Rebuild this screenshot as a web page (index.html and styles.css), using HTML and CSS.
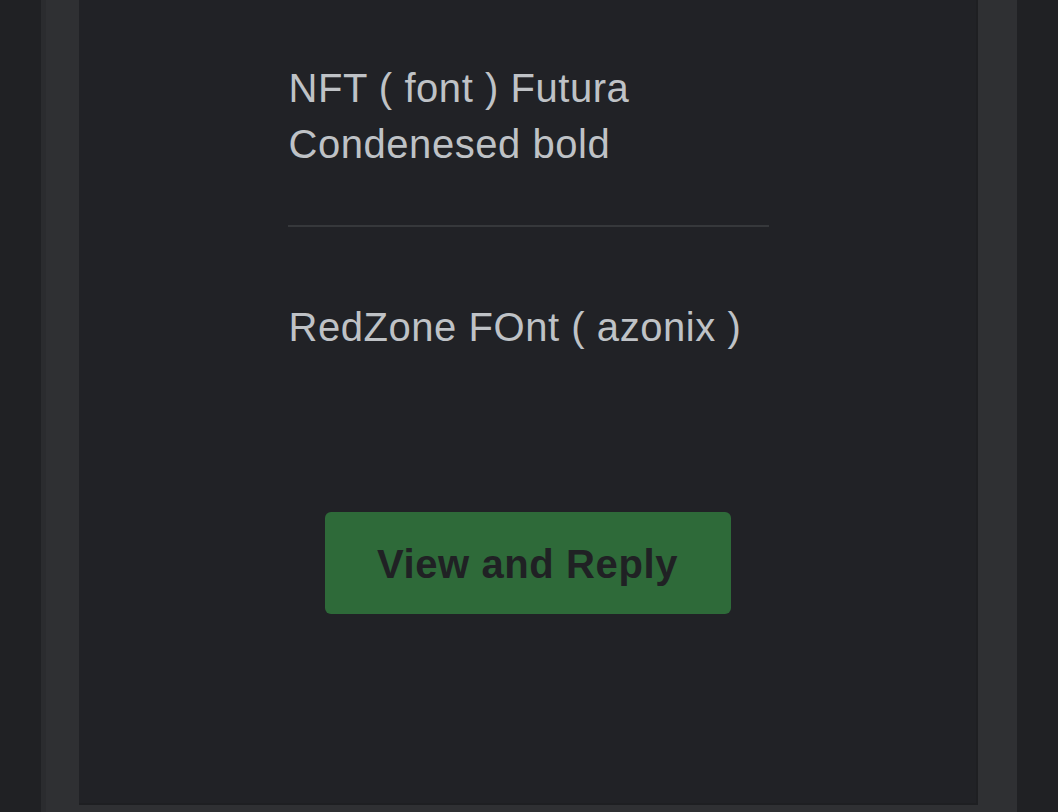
FILE: index.html
```html
<!DOCTYPE html>
<html>
<head>
<meta charset="utf-8">
<link rel="stylesheet" href="styles.css">
</head>
<body>
<div class="frame">
  <div class="card">
    <div class="column">
      <p class="line">NFT ( font ) Futura<br>Condenesed bold</p>
      <hr class="divider">
      <p class="line second">RedZone FOnt ( azonix )</p>
    </div>
    <a class="button" href="#">View and Reply</a>
  </div>
</div>
</body>
</html>
```

FILE: styles.css
```css
html, body {
  margin: 0;
  padding: 0;
  background: #202124;
  height: 100%;
  overflow: hidden;
}
body {
  font-family: "Liberation Sans", Arial, sans-serif;
}
.frame {
  margin: 0 41px;
  height: 812px;
  box-sizing: border-box;
  background: #2f3033;
  border-left: 5px solid #2b2c2f;
  padding: 0 39px 7px 33px;
}
.card {
  height: 805px;
  box-sizing: border-box;
  background: #212226;
  border-right: 2px solid #1e1f22;
  border-bottom: 2px solid #1e1f22;
  padding-top: 60px;
  display: flex;
  flex-direction: column;
  align-items: center;
}
.column {
  width: 480px;
  padding-left: 2px;
}
.line {
  margin: 0;
  font-size: 40px;
  line-height: 56px;
  letter-spacing: 0.55px;
  color: #bfc2c6;
}
.divider {
  border: 0;
  height: 2px;
  background: #36383b;
  margin: 53px 0 72px -1px;
}
.button {
  margin-top: 157px;
  width: 406px;
  height: 102px;
  border-radius: 6px;
  background: #2e6a39;
  color: #202124;
  font-weight: bold;
  font-size: 40px;
  letter-spacing: 0.6px;
  text-decoration: none;
  display: flex;
  align-items: center;
  justify-content: center;
  padding-top: 2px;
  box-sizing: border-box;
}
```
